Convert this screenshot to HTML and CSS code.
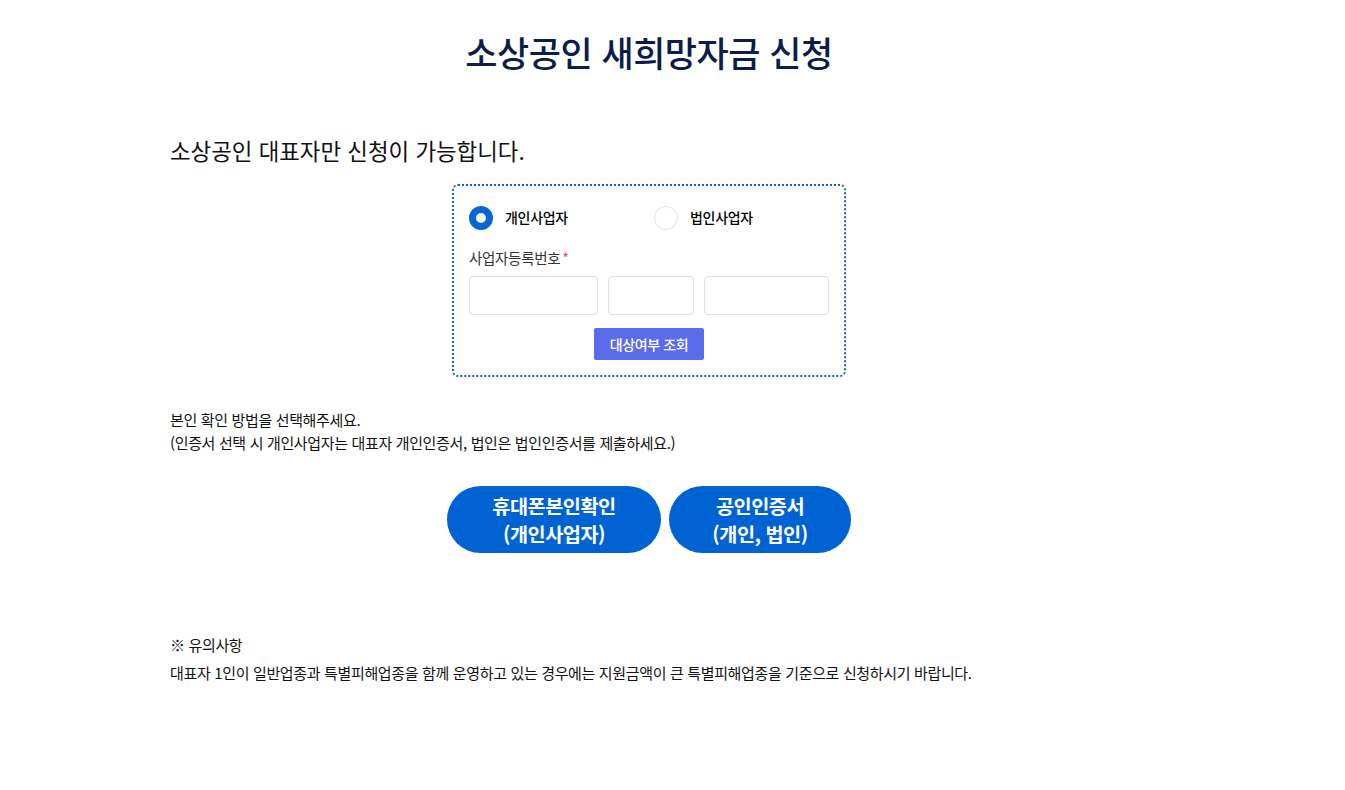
FILE: index.html
```html
<!DOCTYPE html>
<html lang="ko">
<head>
<meta charset="utf-8">
<link rel="stylesheet" href="styles.css">
</head>
<body>
<div class="page">
  <h1 class="title">소상공인 새희망자금 신청</h1>
  <p class="lead">소상공인 대표자만 신청이 가능합니다.</p>

  <div class="check-box">
    <div class="radios">
      <label class="radio radio-first"><span class="dot checked"></span><span class="radio-text">개인사업자</span></label>
      <label class="radio"><span class="dot"></span><span class="radio-text">법인사업자</span></label>
    </div>
    <div class="field-label">사업자등록번호<span class="req">*</span></div>
    <div class="inputs">
      <input class="inp inp1" type="text">
      <input class="inp inp2" type="text">
      <input class="inp inp3" type="text">
    </div>
    <div class="btn-row"><button class="btn-check">대상여부 조회</button></div>
  </div>

  <div class="method">
    <p>본인 확인 방법을 선택해주세요.</p>
    <p>(인증서 선택 시 개인사업자는 대표자 개인인증서, 법인은 법인인증서를 제출하세요.)</p>
  </div>

  <div class="auth-btns">
    <button class="auth auth-phone">휴대폰본인확인<br>(개인사업자)</button>
    <button class="auth auth-cert">공인인증서<br>(개인, 법인)</button>
  </div>

  <div class="notice">
    <p>※ 유의사항</p>
    <p>대표자 1인이 일반업종과 특별피해업종을 함께 운영하고 있는 경우에는 지원금액이 큰 특별피해업종을 기준으로 신청하시기 바랍니다.</p>
  </div>
</div>
</body>
</html>
```

FILE: styles.css
```css
* { box-sizing: border-box; }
html, body { margin: 0; padding: 0; background: #fff; }
body {
  font-family: "Noto Sans CJK KR", "Noto Sans", sans-serif;
  color: #222;
}
.page {
  width: 958px;
  margin-left: 170px;
  padding-top: 27px;
}
p { margin: 0; }
.title {
  margin: 0;
  text-align: center;
  font-size: 35px;
  line-height: 50px;
  font-weight: 500;
  color: #0b1d48;
  letter-spacing: -0.5px;
}
.lead {
  margin-top: 57px;
  font-size: 22.4px;
  line-height: 32px;
  color: #111;
  letter-spacing: 0;
}
.check-box {
  width: 394px;
  margin: 18px auto 0;
  border: 2px dotted #0a63c9;
  border-radius: 6px;
  padding: 20px 15px 15px;
}
.radios { display: flex; align-items: center; height: 24px; }
.radio { display: flex; align-items: center; }
.radio-first { width: 185px; }
.dot {
  width: 24px; height: 24px; border-radius: 50%;
  border: 1px solid #e2e2e2;
  background: #fff;
  margin-right: 12px;
}
.dot.checked {
  border: 7.5px solid #0a66d0;
  background: #f2f2f2;
}
.radio-text {
  font-size: 14px;
  line-height: 20px;
  margin-top: -2px;
  color: #000;
  font-weight: 500;
  letter-spacing: -0.3px;
}
.field-label {
  margin-top: 18px;
  font-size: 14.5px;
  line-height: 20px;
  color: #333;
  letter-spacing: -0.3px;
}
.req { color: #f05050; margin-left: 2px; }
.inputs { display: flex; gap: 10px; margin-top: 8px; }
.inp {
  height: 39px;
  border: 1px solid #dedede;
  border-radius: 4px;
  background: #fff;
  padding: 0;
}
.inp1 { width: 129px; }
.inp2 { width: 86px; }
.inp3 { width: 125px; }
.btn-row { display: flex; justify-content: center; margin-top: 13px; }
.btn-check {
  width: 110px; height: 32px;
  background: #5b6cea;
  border: 0;
  border-radius: 2px;
  color: #fff;
  font-family: inherit;
  font-size: 14px;
  font-weight: 500;
  letter-spacing: -0.4px;
}
.method {
  margin-top: 31px;
  font-size: 15px;
  line-height: 23px;
  color: #111;
  letter-spacing: -0.35px;
}
.auth-btns {
  display: flex;
  justify-content: center;
  gap: 8px;
  margin-top: 32px;
}
.auth {
  height: 67px;
  border: 0;
  border-radius: 34px;
  background: #0063d3;
  color: #fff;
  font-family: inherit;
  font-size: 19.7px;
  font-weight: 700;
  line-height: 28px;
  letter-spacing: -0.5px;
  padding: 0;
}
.auth-phone { width: 214px; }
.auth-cert { width: 182px; }
.notice {
  margin-top: 78px;
  font-size: 15px;
  line-height: 28px;
  color: #111;
  letter-spacing: -0.35px;
}
```
